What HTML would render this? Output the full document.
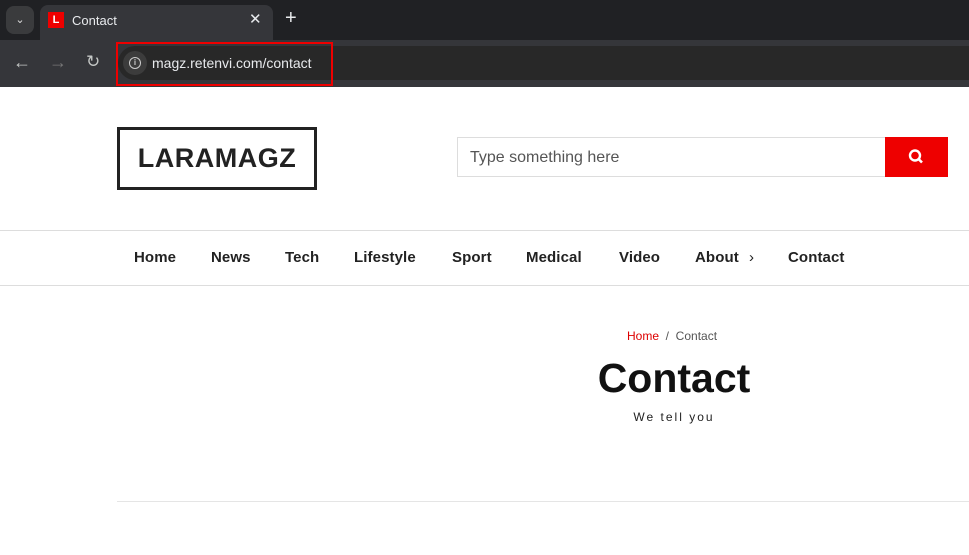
<!DOCTYPE html>
<html><head><meta charset="utf-8"><style>
*{margin:0;padding:0;box-sizing:border-box}
body{width:969px;height:555px;overflow:hidden;background:#fff;font-family:"Liberation Sans",sans-serif;position:relative}
.abs{position:absolute}
</style></head><body>
<div class="abs" style="left:0;top:0;width:969px;height:40px;background:#202124"></div>
<div class="abs" style="left:6px;top:6px;width:28px;height:28px;border-radius:8px;background:#3a3b3d;color:#ddd;font-size:11px;text-align:center;line-height:28px">&#8964;</div>
<div class="abs" style="left:40px;top:5px;width:233px;height:35px;background:#35363a;border-radius:8px 8px 0 0"></div>
<div class="abs" style="left:48px;top:12px;width:16px;height:16px;background:#e00;color:#fff;font-size:11px;font-weight:bold;text-align:center;line-height:16px">L</div>
<div class="abs" style="left:72px;top:13px;color:#e8eaed;font-size:13px">Contact</div>
<div class="abs" style="left:249px;top:10px;color:#e8eaed;font-size:15px">✕</div>
<div class="abs" style="left:285px;top:7px;color:#e8eaed;font-size:20px">+</div>
<div class="abs" style="left:0;top:40px;width:969px;height:47px;background:#35363a"></div>
<div class="abs" style="left:13px;top:52px;color:#c4c7c5;font-size:18px">←</div>
<div class="abs" style="left:49px;top:52px;color:#777;font-size:18px">→</div>
<div class="abs" style="left:86px;top:52px;color:#c4c7c5;font-size:17px">↻</div>
<div class="abs" style="left:118px;top:46px;width:851px;height:34px;background:#282828;border-radius:17px 0 0 17px"></div>
<div class="abs" style="left:123px;top:51px;width:24px;height:24px;border-radius:12px;background:#3c3c3c"></div>
<div class="abs" style="left:129px;top:57px;width:12px;height:12px;border:1.5px solid #ccc;border-radius:50%;color:#ccc;font-size:8px;text-align:center;line-height:9px;font-weight:bold">i</div>
<div class="abs" style="left:152px;top:55px;color:#e8eaed;font-size:14px">magz.retenvi.com/contact</div>
<div class="abs" style="left:116px;top:42px;width:217px;height:44px;border:2px solid #e00"></div>

<div class="abs" style="left:117px;top:127px;width:200px;height:63px;border:3px solid #222;font-size:27px;font-weight:bold;color:#222;text-align:center;line-height:57px;letter-spacing:0.5px">LARAMAGZ</div>
<div class="abs" style="left:457px;top:137px;width:429px;height:40px;border:1px solid #ddd;color:#555;font-size:16px;padding-left:12px;line-height:40px">Type something here</div>
<div class="abs" style="left:885px;top:137px;width:63px;height:40px;background:#e00">
<svg width="63" height="40"><circle cx="30" cy="18.5" r="5" fill="none" stroke="#fff" stroke-width="2.4"/><line x1="33.5" y1="22" x2="37" y2="25.5" stroke="#fff" stroke-width="2.6"/></svg></div>
<div class="abs" style="left:0;top:230px;width:969px;height:1px;background:#ddd"></div>
<div class="abs" style="left:0;top:285px;width:969px;height:1px;background:#ddd"></div>
<div class="abs" style="top:249px;left:0;font-size:15px;font-weight:bold;color:#222;letter-spacing:0.1px;white-space:nowrap">
<span class="abs" style="left:134px">Home</span><span class="abs" style="left:211px">News</span><span class="abs" style="left:285px">Tech</span><span class="abs" style="left:354px">Lifestyle</span><span class="abs" style="left:452px">Sport</span><span class="abs" style="left:526px">Medical</span><span class="abs" style="left:619px">Video</span><span class="abs" style="left:695px">About</span><span class="abs" style="left:749px;font-weight:normal">›</span><span class="abs" style="left:788px">Contact</span></div>
<div class="abs" style="left:627px;top:329px;font-size:12px;color:#555"><span style="color:#d00">Home</span>&nbsp;&nbsp;/&nbsp;&nbsp;Contact</div>
<div class="abs" style="left:574px;top:355px;width:200px;text-align:center;font-size:41px;font-weight:bold;color:#111">Contact</div>
<div class="abs" style="left:574px;top:410px;width:200px;text-align:center;font-size:12px;color:#222;letter-spacing:2px">We tell you</div>
<div class="abs" style="left:117px;top:501px;width:852px;height:1px;background:#e5e5e5"></div>
</body></html>
